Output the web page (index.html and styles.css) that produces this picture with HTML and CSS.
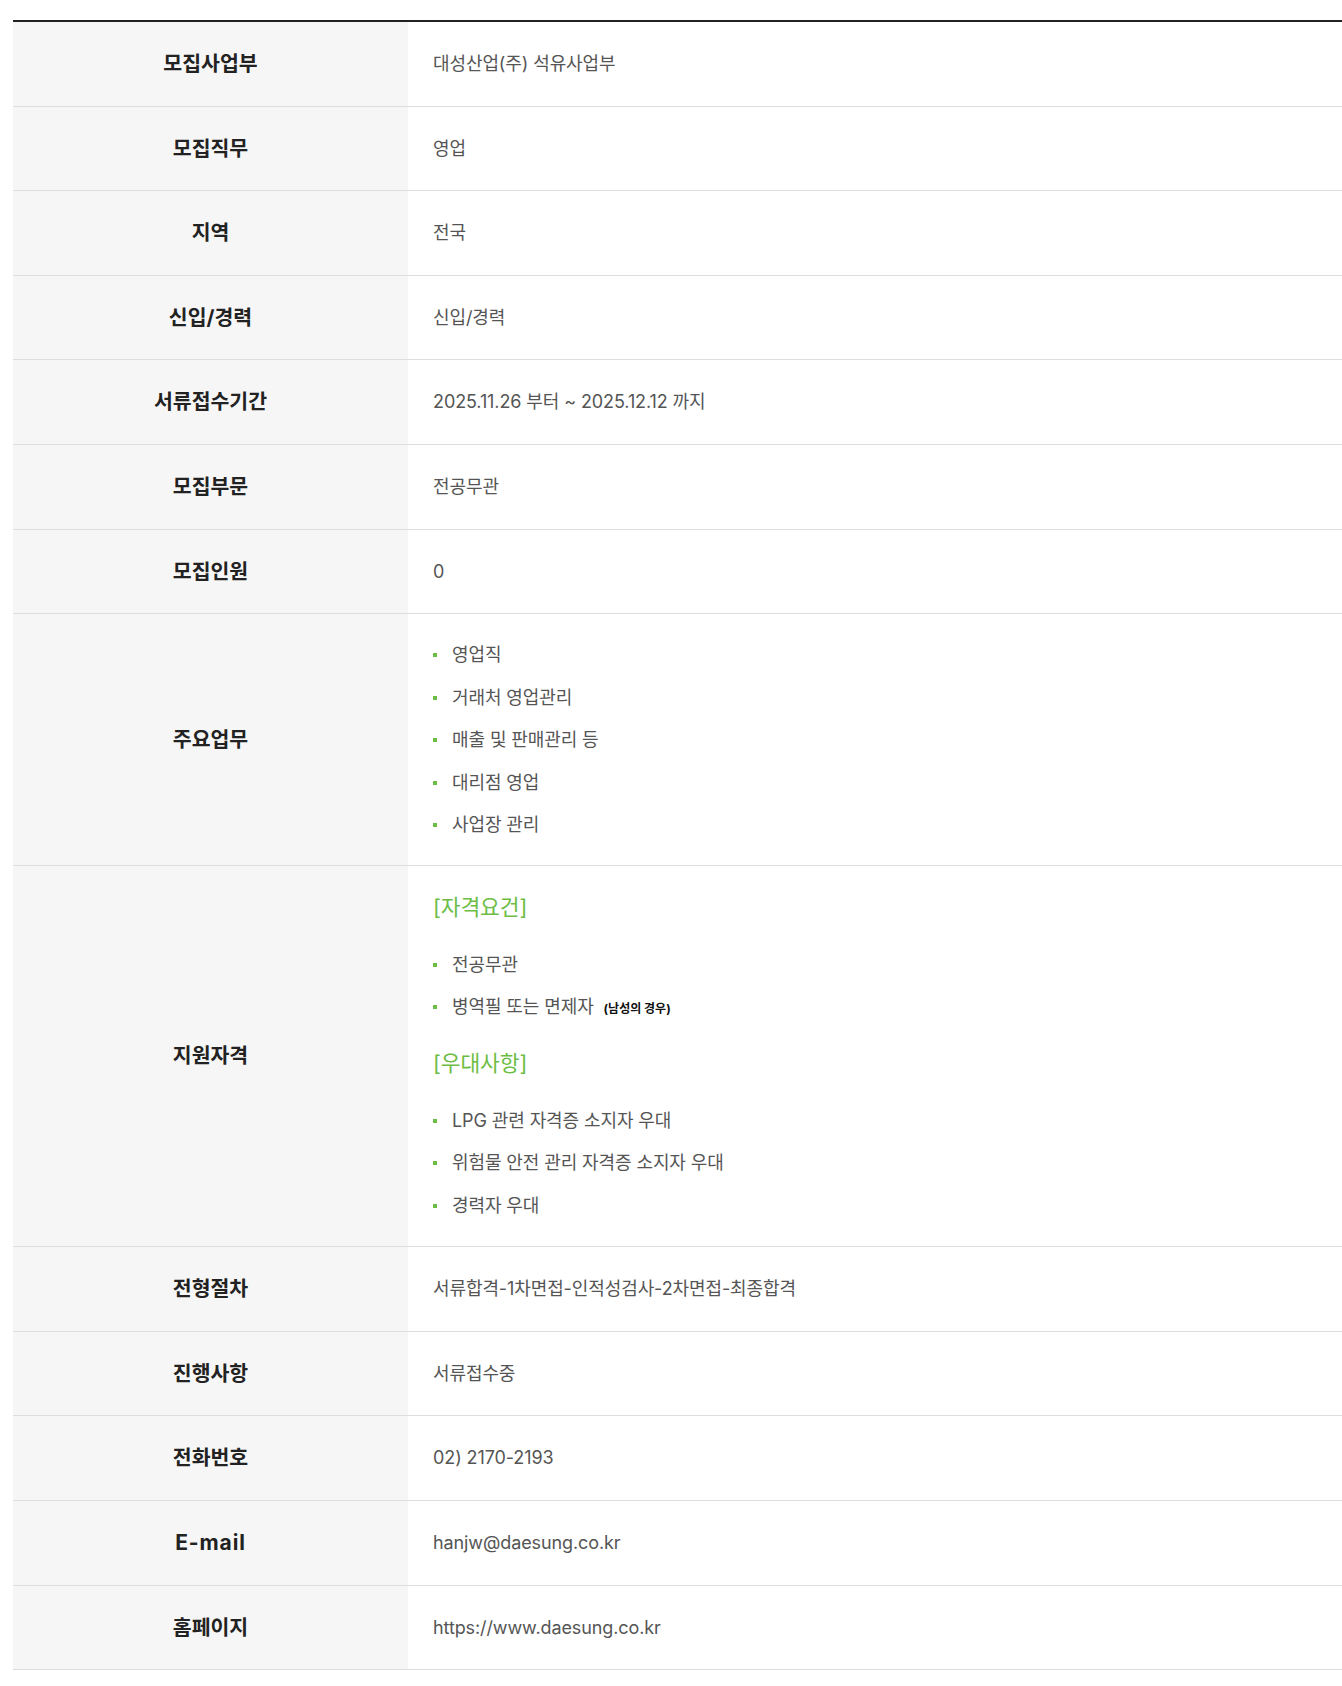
FILE: index.html
```html
<!DOCTYPE html>
<html lang="ko">
<head>
<meta charset="utf-8">
<title>채용 상세</title>
<link rel="stylesheet" href="styles.css">
</head>
<body>
<div class="wrap">
  <table class="info">
    <tbody>
      <tr><th>모집사업부</th><td>대성산업(주) 석유사업부</td></tr>
      <tr><th>모집직무</th><td>영업</td></tr>
      <tr><th>지역</th><td>전국</td></tr>
      <tr><th>신입/경력</th><td>신입/경력</td></tr>
      <tr><th>서류접수기간</th><td>2025.11.26 부터 ~ 2025.12.12 까지</td></tr>
      <tr><th>모집부문</th><td>전공무관</td></tr>
      <tr><th>모집인원</th><td>0</td></tr>
      <tr>
        <th>주요업무</th>
        <td class="list-cell list-only">
          <ul class="dots">
            <li>영업직</li>
            <li>거래처 영업관리</li>
            <li>매출 및 판매관리 등</li>
            <li>대리점 영업</li>
            <li>사업장 관리</li>
          </ul>
        </td>
      </tr>
      <tr>
        <th>지원자격</th>
        <td class="list-cell">
          <p class="sub-title">[자격요건]</p>
          <ul class="dots">
            <li>전공무관</li>
            <li>병역필 또는 면제자 <small class="note">(남성의 경우)</small></li>
          </ul>
          <p class="sub-title">[우대사항]</p>
          <ul class="dots">
            <li>LPG 관련 자격증 소지자 우대</li>
            <li>위험물 안전 관리 자격증 소지자 우대</li>
            <li>경력자 우대</li>
          </ul>
        </td>
      </tr>
      <tr><th>전형절차</th><td>서류합격-1차면접-인적성검사-2차면접-최종합격</td></tr>
      <tr><th>진행사항</th><td>서류접수중</td></tr>
      <tr><th>전화번호</th><td>02) 2170-2193</td></tr>
      <tr><th class="latin">E-mail</th><td>hanjw@daesung.co.kr</td></tr>
      <tr><th>홈페이지</th><td>https://www.daesung.co.kr</td></tr>
    </tbody>
  </table>
</div>
</body>
</html>
```

FILE: styles.css
```css
html, body {
  margin: 0;
  padding: 0;
  background: #fff;
}

body {
  font-family: Inter, "Noto Sans CJK KR", sans-serif;
  color: #555;
}

.wrap {
  padding: 20px 0 0 13px;
}

.info {
  width: 100%;
  border-collapse: collapse;
  border-top: 2px solid #222;
}

.info th,
.info td {
  border-bottom: 1px solid #ddd;
  padding: 28px 25px;
  line-height: 27.6px;
  vertical-align: middle;
}

.info th {
  width: 345px;
  background: #f6f6f6;
  color: #222;
  font-size: 20.5px;
  font-weight: 700;
  text-align: center;
}

.info th.latin {
  font-size: 21px;
  letter-spacing: 0.9px;
}

.info td {
  text-align: left;
  font-size: 18px;
  font-weight: 400;
  color: #555;
  letter-spacing: -0.1px;
}

.info td.list-cell {
  padding: 18px 25px 19px;
}

.info td.list-only {
  padding: 20px 25px 18px;
}

.dots {
  list-style: none;
  margin: 0;
  padding: 0;
}

.dots li {
  position: relative;
  padding-left: 19px;
  line-height: 42.5px;
}

.dots li::before {
  content: "";
  position: absolute;
  left: 0;
  top: 19px;
  width: 4px;
  height: 4px;
  background: #6cbd45;
}

.sub-title {
  margin: 17px 0 22px;
  font-size: 21.5px;
  line-height: 30px;
  color: #6cbd45;
}

.sub-title:first-child {
  margin-top: 8px;
}

.note {
  margin-left: 5px;
  font-size: 12px;
  font-weight: 700;
  color: #111;
  letter-spacing: 0;
}
```
